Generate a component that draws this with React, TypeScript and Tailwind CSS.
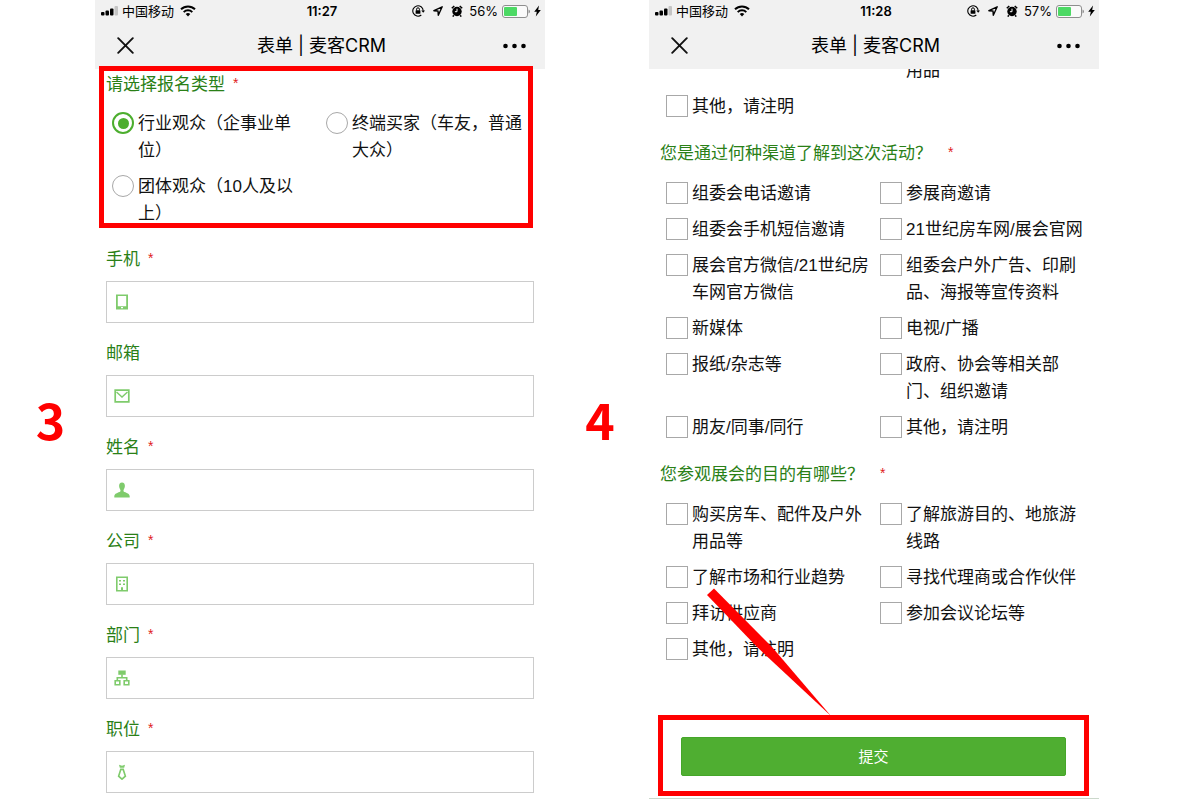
import { FC, ReactNode } from 'react';

interface OptionItem {
  label: string;
  checked?: boolean;
}

interface Field {
  id: string;
  label: string;
  required: boolean;
  icon: ReactNode;
}

const visitorTypes: OptionItem[] = [
  { label: '行业观众（企事业单位）', checked: true },
  { label: '终端买家（车友，普通大众）' },
  { label: '团体观众（10人及以上）' },
];

const channels: OptionItem[] = [
  { label: '组委会电话邀请' },
  { label: '参展商邀请' },
  { label: '组委会手机短信邀请' },
  { label: '21世纪房车网/展会官网' },
  { label: '展会官方微信/21世纪房车网官方微信' },
  { label: '组委会户外广告、印刷品、海报等宣传资料' },
  { label: '新媒体' },
  { label: '电视/广播' },
  { label: '报纸/杂志等' },
  { label: '政府、协会等相关部门、组织邀请' },
  { label: '朋友/同事/同行' },
  { label: '其他，请注明' },
];

const purposes: OptionItem[] = [
  { label: '购买房车、配件及户外用品等' },
  { label: '了解旅游目的、地旅游线路' },
  { label: '了解市场和行业趋势' },
  { label: '寻找代理商或合作伙伴' },
  { label: '拜访供应商' },
  { label: '参加会议论坛等' },
  { label: '其他，请注明' },
];

const fields: Field[] = [
  {
    id: 'phone',
    label: '手机',
    required: true,
    icon: (
      <path fillRule="evenodd" d="M2 0.500h12v15H2zM3.800 2v10.300h8.400V2zM7 13v1.300h2V13z" />
    ),
  },
  {
    id: 'email',
    label: '邮箱',
    required: false,
    icon: (
      <g fill="none" stroke="currentColor" strokeWidth="1.700">
        <path d="M1.200 2.200h13.600v11.600H1.200z" />
        <path d="M2.500 4l5.500 5 5.500-5" strokeWidth="1.400" />
      </g>
    ),
  },
  {
    id: 'name',
    label: '姓名',
    required: true,
    icon: (
      <path d="M8 .4c2 0 3 1.500 2.900 3.700-.1 1.700-.8 3-1.300 3.800-.3.9 0 1.700.9 2.100 2.400 1 5.100 1.900 5.200 4.200v1.300H.3v-1.300c.1-2.300 2.800-3.200 5.200-4.200.9-.4 1.200-1.200.9-2.100C5.900 7.100 5.200 5.800 5.100 4.100 5 1.900 6 .4 8 .4z" />
    ),
  },
  {
    id: 'company',
    label: '公司',
    required: true,
    icon: (
      <path
        fillRule="evenodd"
        d="M2 .5h12v15H2zM3.600 2.100v11.800h3.400v-2.600h2v2.600h3.400V2.100zM5 4h2v1.600H5zM9 4h2v1.600H9zM5 7.500h2v1.600H5zM9 7.500h2v1.600H9z"
      />
    ),
  },
  {
    id: 'department',
    label: '部门',
    required: true,
    icon: (
      <>
        <path d="M4.300.5h7.400v4.300H4.300z" />
        <path
          d="M8 4.500v3.300M3.300 10.500V7.800h9.400v2.700M1.200 10.700h4.600v4.100H1.200zM10.200 10.700h4.600v4.100h-4.600z"
          fill="none"
          stroke="currentColor"
          strokeWidth="1.600"
        />
      </>
    ),
  },
  {
    id: 'position',
    label: '职位',
    required: true,
    icon: (
      <>
        <path d="M5 .8l3 1 3-1-.8 2.900H5.800z" />
        <path d="M6.800 5.400h2.400l2.200 6.800L8 15.200l-3.400-3z" fill="none" stroke="currentColor" strokeWidth="1.600" />
      </>
    ),
  },
];

const StatusBar: FC<{ time: string; battery: string }> = ({ time, battery }) => (
  <div className="grid h-[22px] grid-cols-[1fr_auto_1fr] items-center pl-1.5 pr-1 text-[13px] leading-none">
    <div className="flex items-center">
      <svg width="17" height="10" viewBox="0 0 17 10" aria-hidden="true">
        <rect x="0" y="6" width="3.500" height="3.500" rx="1" />
        <rect x="4.500" y="4.500" width="3.500" height="5" rx="1" />
        <rect x="9" y="2.500" width="3.500" height="7" rx="1" />
        <rect x="13.500" y="0" width="3.500" height="9.500" rx="1" fill="#c4c4c4" />
      </svg>
      <span className="ml-1">中国移动</span>
      <svg className="ml-1.5" width="16" height="12" viewBox="0 0 16 12" aria-hidden="true">
        <g fill="none" stroke="#000" strokeWidth="2">
          <path d="M1 4.300a10 10 0 0 1 14 0" />
          <path d="M3.700 7.100a6.200 6.200 0 0 1 8.600 0" />
        </g>
        <path d="M5.700 9.100a3.300 3.300 0 0 1 4.600 0L8 11.600z" />
      </svg>
    </div>
    <span className="pl-0.5 font-semibold">{time}</span>
    <div className="flex items-center justify-end">
      <svg width="13" height="12" viewBox="0 0 13 12" aria-hidden="true">
        <path d="M9.300 10A5.200 5.200 0 1 1 11.200 5.800" fill="none" stroke="#000" strokeWidth="1.100" />
        <path d="M9.300 5.400h3.700l-1.800 2.300z" />
        <rect x="3.600" y="5.200" width="4.800" height="3.600" rx=".5" />
        <path d="M4.600 5.500V4.200a1.400 1.400 0 0 1 2.800 0v1.300" fill="none" stroke="#000" />
      </svg>
      <svg className="ml-2" width="10" height="10" viewBox="0 0 10 10" aria-hidden="true">
        <path d="M9.200.8L.9 4.700l4.100.3.300 4.200z" fill="none" stroke="#000" strokeWidth="1.400" strokeLinejoin="round" />
      </svg>
      <svg className="ml-2" width="12" height="12" viewBox="0 0 12 12" aria-hidden="true">
        <circle cx="6" cy="6.500" r="4.700" />
        <path d="M.8 3.300L3.300 1M11.200 3.300L8.700 1M2.800 10.200l-1 1.400M9.200 10.200l1 1.400" stroke="#000" strokeWidth="1.500" />
        <path d="M6 3.700v3H3.900" fill="none" stroke="#fff" strokeWidth="1" />
      </svg>
      <span className="ml-1.5">{battery}</span>
      <svg className="ml-1" width="28" height="13" viewBox="0 0 28 13" aria-hidden="true">
        <rect x=".5" y=".5" width="25" height="12" rx="2.500" fill="#fafafa" stroke="#8e8e8e" />
        <rect x="2" y="2" width="13" height="9" rx="1" fill="#4cd964" />
        <path d="M26.500 4.500q1.500.3 1.500 2t-1.500 2z" fill="#8e8e8e" />
      </svg>
      <svg className="ml-1" width="7" height="12" viewBox="0 0 7 12" aria-hidden="true">
        <path d="M5 .5L.2 6.800h2.600L1.800 11.500 6.800 5H4.200z" />
      </svg>
    </div>
  </div>
);

const PhoneHeader: FC<{ time: string; battery: string }> = ({ time, battery }) => (
  <header className="relative bg-[#f1f1f1] font-[Inter,'Noto_Sans_CJK_SC',sans-serif] text-black">
    <StatusBar time={time} battery={battery} />
    <div className="grid h-[47px] grid-cols-[1fr_auto_1fr] items-center pl-[22px] pr-[19px]">
      <button type="button" aria-label="关闭">
        <svg width="17" height="17" viewBox="0 0 17 17" fill="none" stroke="#111" strokeWidth="1.900" strokeLinecap="round">
          <path d="M1.200 1.200l14.600 14.600M15.800 1.200L1.200 15.800" />
        </svg>
      </button>
      <h1 className="text-[18px] leading-none">表单 | 麦客CRM</h1>
      <button type="button" aria-label="更多" className="justify-self-end">
        <svg width="23" height="6" viewBox="0 0 23 6">
          <circle cx="2.500" cy="3" r="2.300" />
          <circle cx="11.500" cy="3" r="2.300" />
          <circle cx="20.500" cy="3" r="2.300" />
        </svg>
      </button>
    </div>
  </header>
);

const Star: FC = () => <span className="pt-0.5 text-sm text-[#e02020]">*</span>;

const Option: FC<{ type: 'radio' | 'checkbox'; name: string; item: OptionItem }> = ({ type, name, item }) => (
  <label className="flex items-start gap-1">
    {type === 'radio' ? (
      <input
        type="radio"
        name={name}
        defaultChecked={item.checked}
        className="mt-0.5 grid size-[22px] shrink-0 appearance-none place-content-center rounded-full border border-[#a8a8a8] bg-white before:size-[11px] before:rounded-full checked:border-2 checked:border-[#4cae2e] checked:before:bg-[#4cae2e]"
      />
    ) : (
      <input
        type="checkbox"
        name={name}
        className="mt-0.5 size-[22px] shrink-0 appearance-none border border-[#a8a8a8] bg-white checked:bg-[#4cae2e]"
      />
    )}
    <span>{item.label}</span>
  </label>
);

const Question: FC<{ title: string; name: string; items: OptionItem[] }> = ({ title, name, items }) => (
  <fieldset className="mt-5">
    <legend className="flex gap-4 pl-[11px] text-[#2a8017]">
      {title}
      <Star />
    </legend>
    <div className="mt-[13px] grid grid-cols-2 gap-x-2 gap-y-[9px] pl-[17px] pr-[13px]">
      {items.map((item) => (
        <Option key={item.label} type="checkbox" name={name} item={item} />
      ))}
    </div>
  </fieldset>
);

const StepNumber: FC<{ value: number }> = ({ value }) => (
  <div className="flex h-[842px] max-h-screen items-center justify-center pl-1.5 pt-9 font-['Noto_Sans_CJK_SC',sans-serif] text-[50px] font-bold leading-none text-[#ff0000]">
    {value}
  </div>
);

const RegistrationScreen: FC = () => (
  <form>
    <PhoneHeader time="11:27" battery="56%" />

    {/* Visitor type, highlighted */}
    <fieldset className="relative -mt-[3px] ml-1 mr-3 border-[5px] border-[#ff0000]">
      <div className="flex gap-2 pl-0.5 text-[#2a8017]">
        请选择报名类型
        <Star />
      </div>
      <div className="-mb-1 mt-3 grid grid-cols-2 gap-x-3 gap-y-[9px] pl-2">
        {visitorTypes.map((item) => (
          <Option key={item.label} type="radio" name="visitorType" item={item} />
        ))}
      </div>
    </fieldset>

    {/* Contact fields */}
    <div className="mt-[18px] flex flex-col gap-[17px] px-[11px]">
      {fields.map((field) => (
        <div key={field.id}>
          <label htmlFor={field.id} className="flex gap-2 text-[#2a8017]">
            {field.label}
            {field.required && <Star />}
          </label>
          <div className="mt-2 flex h-[42px] items-center border border-[#ccc] pl-[7px] text-[#7fcb6c]">
            <svg width="16" height="16" viewBox="0 0 16 16" fill="currentColor" aria-hidden="true">
              {field.icon}
            </svg>
            <input id={field.id} type="text" className="ml-2 h-full min-w-0 flex-1 text-black outline-none" />
          </div>
        </div>
      ))}
    </div>
  </form>
);

const SurveyScreen: FC = () => (
  <form className="border-b border-[#cbd8cb]">
    <div className="relative z-10">
      <PhoneHeader time="11:28" battery="57%" />
    </div>

    {/* Tail of the previous question, scrolled under the header */}
    <div className="-mt-3 grid grid-cols-2 gap-x-2 gap-y-[9px] pl-[17px] pr-[13px]">
      <span className="col-start-2 pl-[26px]">用品</span>
      <Option type="checkbox" name="previous" item={{ label: '其他，请注明' }} />
    </div>

    <Question title="您是通过何种渠道了解到这次活动？" name="channel" items={channels} />
    <Question title="您参观展会的目的有哪些？" name="purpose" items={purposes} />

    {/* Submit button with its callout */}
    <div className="relative mb-0.5 ml-[9px] mr-2.5 mt-[52px] border-[5px] border-[#ff0000] px-[18px] pb-[15px] pt-[17px]">
      <svg className="absolute bottom-full left-11 mb-1" width="124" height="128" viewBox="0 0 124 128" aria-hidden="true">
        <path d="M0 7L7 .5 65 59 124 128 50 59z" fill="#ff0000" />
      </svg>
      <button
        type="button"
        className="h-[39px] w-full rounded-xs border border-[#45a629] bg-[#4fae31] text-[15px] text-white"
      >
        提交
      </button>
    </div>
  </form>
);

const App: FC = () => {
  return (
    <main className="grid min-h-screen grid-cols-[95fr_450fr_104fr_450fr_101fr] items-start bg-white font-['Liberation_Sans','Noto_Sans_CJK_SC',sans-serif] text-[17px] leading-[27px] text-[#111]">
      <StepNumber value={3} />
      <RegistrationScreen />
      <StepNumber value={4} />
      <SurveyScreen />
    </main>
  );
};

export default App;
